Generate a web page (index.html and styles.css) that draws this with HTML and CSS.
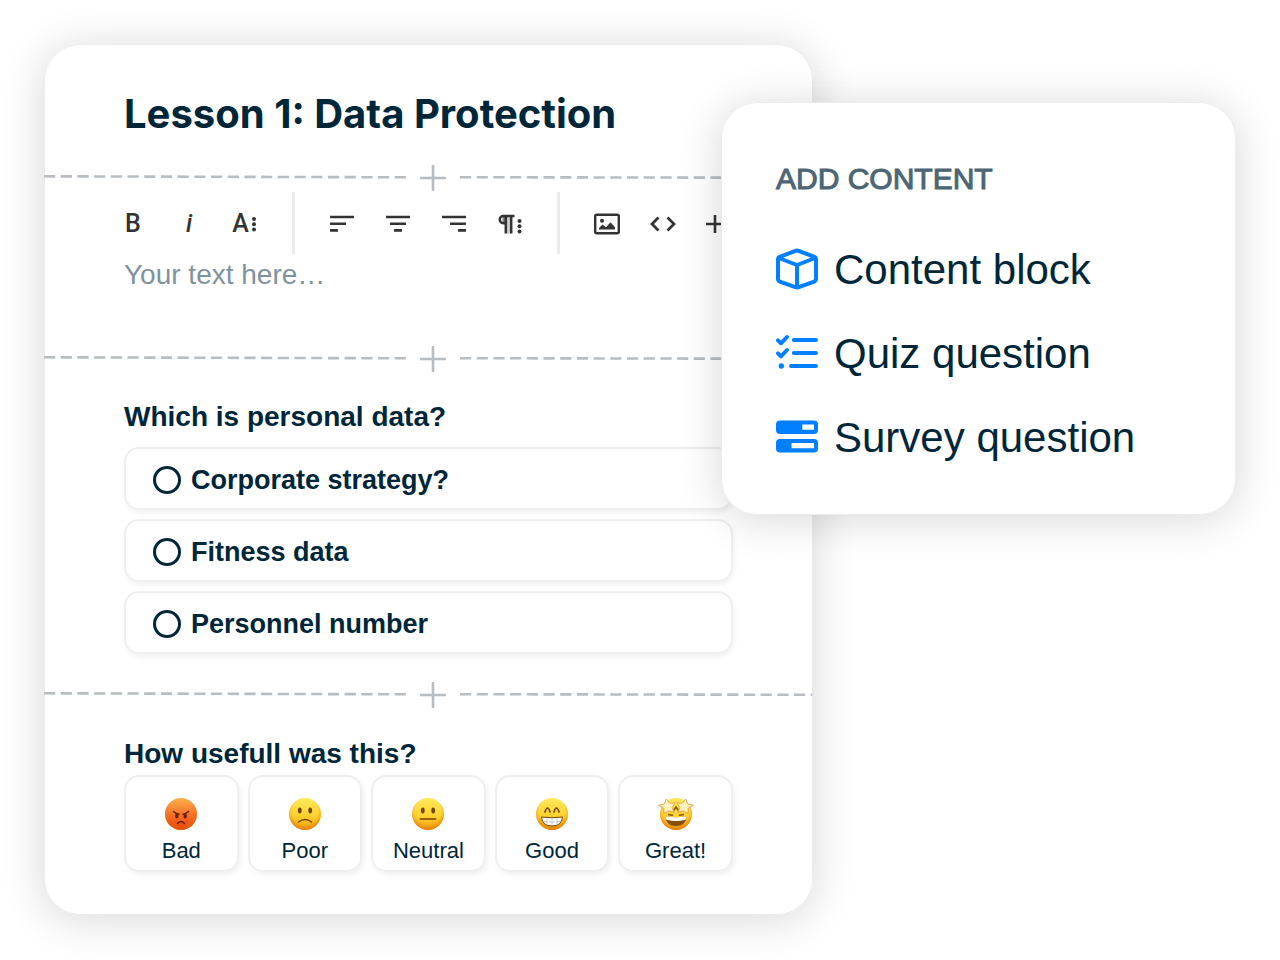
FILE: index.html
```html
<!DOCTYPE html>
<html lang="en">
<head>
<meta charset="utf-8">
<meta name="viewport" content="width=device-width, initial-scale=1">
<title>Lesson editor</title>
<link rel="stylesheet" href="styles.css">
</head>
<body>
<svg class="defs" width="0" height="0" aria-hidden="true">
  <defs>
    <linearGradient id="yellow" x1="0" y1="0" x2="0" y2="1">
      <stop offset="0" stop-color="#ffe95c"/><stop offset=".55" stop-color="#fdd230"/><stop offset="1" stop-color="#f29a0c"/>
    </linearGradient>
    <linearGradient id="red" x1="0" y1="0" x2="0" y2="1">
      <stop offset="0" stop-color="#fbb04c"/><stop offset=".5" stop-color="#f6752a"/><stop offset="1" stop-color="#ee3c08"/>
    </linearGradient>
    <radialGradient id="rim" cx=".5" cy=".42" r=".58">
      <stop offset=".7" stop-color="#e07a00" stop-opacity="0"/><stop offset="1" stop-color="#d96c00" stop-opacity=".6"/>
    </radialGradient>
  </defs>
</svg>
<div class="stage">
  <main class="card">
    <h1 class="title">Lesson 1: Data Protection</h1>

    <div class="divider divider-first">
      <svg class="dash dash-left" aria-hidden="true"><line x1="0" y1="11.3" x2="100%" y2="12.3"/></svg>
      <button class="insert" type="button" aria-label="Insert block"><svg width="26" height="26" viewBox="0 0 26 26"><path d="M13 1v24M1 13h24"/></svg></button>
      <svg class="dash dash-right" aria-hidden="true"><line x1="0" y1="12.2" x2="100%" y2="12.8"/></svg>
    </div>

    <section class="editor">
      <div class="toolbar" role="toolbar" aria-label="Text formatting">
        <button class="tool" type="button" aria-label="Bold">B</button>
        <button class="tool tool-italic" type="button" aria-label="Italic">i</button>
        <button class="tool" type="button" aria-label="More text">A<svg width="8" height="18" viewBox="0 0 8 18"><g fill="#333"><circle cx="4" cy="4" r="2"/><circle cx="4" cy="9.300" r="2"/><circle cx="4" cy="14.500" r="2"/></g></svg></button>
        <span class="separator"></span>
        <button class="tool" type="button" aria-label="Align left"><svg width="24" height="18" viewBox="0 0 24 18"><path class="bars" d="M0 2h24M0 8.700h16M0 15.400h8"/></svg></button>
        <button class="tool" type="button" aria-label="Align center"><svg width="24" height="18" viewBox="0 0 24 18"><path class="bars" d="M0 2h24M4 8.700h16M8 15.400h8"/></svg></button>
        <button class="tool" type="button" aria-label="Align right"><svg width="24" height="18" viewBox="0 0 24 18"><path class="bars" d="M0 2h24M8 8.700h16M16 15.400h8"/></svg></button>
        <button class="tool" type="button" aria-label="Paragraph format"><svg width="24" height="20" viewBox="0 0 24 20"><g fill="none" stroke="#333" stroke-width="2.500"><path d="M16.500 2H5.300a3.600 3.600 0 0 0 0 7.200H7M7.800 2v17.500M13.200 2v17.500"/></g><path d="M4.500 2h3v7h-3z" fill="#333" opacity=".6"/><path d="M9 3h3v16.500H9z" fill="#333" opacity=".25"/><g fill="#333"><circle cx="21.500" cy="7" r="2"/><circle cx="21.500" cy="12.300" r="2"/><circle cx="21.500" cy="17.500" r="2"/></g></svg></button>
        <span class="separator"></span>
        <button class="tool" type="button" aria-label="Insert image"><svg width="28" height="22" viewBox="0 0 28 22"><rect x="2.200" y="1.700" width="23.600" height="18.600" rx="1.500" fill="none" stroke="#333" stroke-width="2.400"/><circle cx="9" cy="7.700" r="2" fill="#333"/><path d="M6 16.500v-1.500l3.500-3.500 3.500 2.800 4.500-5 4.500 5v2.200z" fill="#333"/></svg></button>
        <button class="tool" type="button" aria-label="Code view"><svg width="28" height="18" viewBox="0 0 28 18"><path d="M9.500 2.500L3 9l6.500 6.500M18.500 2.500L25 9l-6.500 6.500" fill="none" stroke="#333" stroke-width="2.700"/></svg></button>
        <button class="tool" type="button" aria-label="More"><svg width="28" height="20" viewBox="0 0 28 20"><path d="M10 1v18M1 10h18" fill="none" stroke="#333" stroke-width="2.600"/></svg></button>
      </div>
      <input class="text-entry" type="text" aria-label="Text" placeholder="Your text here…">
    </section>

    <div class="divider divider-second">
      <svg class="dash dash-left" aria-hidden="true"><line x1="0" y1="11.3" x2="100%" y2="12.3"/></svg>
      <button class="insert" type="button" aria-label="Insert block"><svg width="26" height="26" viewBox="0 0 26 26"><path d="M13 1v24M1 13h24"/></svg></button>
      <svg class="dash dash-right" aria-hidden="true"><line x1="0" y1="12.2" x2="100%" y2="12.8"/></svg>
    </div>

    <section class="block">
      <h2 class="question">Which is personal data?</h2>
      <div class="options">
        <label class="option"><input class="radio" type="radio" name="personal">Corporate strategy?</label>
        <label class="option"><input class="radio" type="radio" name="personal">Fitness data</label>
        <label class="option"><input class="radio" type="radio" name="personal">Personnel number</label>
      </div>
    </section>

    <div class="divider divider-third">
      <svg class="dash dash-left" aria-hidden="true"><line x1="0" y1="11.3" x2="100%" y2="12.3"/></svg>
      <button class="insert" type="button" aria-label="Insert block"><svg width="26" height="26" viewBox="0 0 26 26"><path d="M13 1v24M1 13h24"/></svg></button>
      <svg class="dash dash-right" aria-hidden="true"><line x1="0" y1="12.2" x2="100%" y2="12.8"/></svg>
    </div>

    <section class="block">
      <h2 class="question">How usefull was this?</h2>
      <div class="ratings">
        <button class="rating" type="button">
          <svg class="emoji" viewBox="0 0 36 36"><circle cx="18" cy="18" r="16" fill="url(#red)"/><circle cx="18" cy="18" r="16" fill="url(#rim)"/><g fill="none" stroke="#6b2203" stroke-width="1.500" stroke-linecap="round"><path d="M10.500 15.500q2.500 2.500 5.500 2.800M25.500 15.500q-2.500 2.500-5.500 2.800M14.500 27.500q3.500-3.800 7 0"/></g><ellipse cx="13.800" cy="20" rx="1.700" ry="2.600" fill="#6b2203"/><ellipse cx="22.200" cy="20" rx="1.700" ry="2.600" fill="#6b2203"/></svg>
          Bad</button>
        <button class="rating" type="button">
          <svg class="emoji" viewBox="0 0 36 36"><circle cx="18" cy="18" r="16" fill="url(#yellow)"/><circle cx="18" cy="18" r="16" fill="url(#rim)"/><ellipse cx="12.800" cy="14.500" rx="1.900" ry="3" fill="#734506"/><ellipse cx="23.200" cy="14.500" rx="1.900" ry="3" fill="#734506"/><path d="M11.500 26q6.500-4.800 13 0" fill="none" stroke="#734506" stroke-width="1.500" stroke-linecap="round"/></svg>
          Poor</button>
        <button class="rating" type="button">
          <svg class="emoji" viewBox="0 0 36 36"><circle cx="18" cy="18" r="16" fill="url(#yellow)"/><circle cx="18" cy="18" r="16" fill="url(#rim)"/><ellipse cx="12.800" cy="14.500" rx="1.900" ry="3" fill="#734506"/><ellipse cx="23.200" cy="14.500" rx="1.900" ry="3" fill="#734506"/><path d="M10.500 23h15" fill="none" stroke="#734506" stroke-width="1.700" stroke-linecap="round"/></svg>
          Neutral</button>
        <button class="rating" type="button">
          <svg class="emoji" viewBox="0 0 36 36"><circle cx="18" cy="18" r="16" fill="url(#yellow)"/><circle cx="18" cy="18" r="16" fill="url(#rim)"/><path d="M11 16q1.200-4 2.500-4t2.500 4M20 16q1.200-4 2.500-4t2.500 4" fill="none" stroke="#734506" stroke-width="1.600" stroke-linecap="round"/><path d="M7.500 21q10.500 1.500 21 0q-.8 9-10.500 9t-10.500-9z" fill="#fff" stroke="#734506" stroke-width="1"/><path d="M8.500 25.300q9.500 1.500 19 0M13 22v7M18 22.500v7.500M23 22v7" fill="none" stroke="#b5b5b0" stroke-width=".7"/></svg>
          Good</button>
        <button class="rating" type="button">
          <svg class="emoji" viewBox="0 0 36 36"><circle cx="18" cy="18" r="16" fill="url(#yellow)"/><circle cx="18" cy="18" r="16" fill="url(#rim)"/><path d="M7.500 20.500q10.500 1.500 21 0q-.8 9.500-10.500 9.500t-10.500-9.500z" fill="#87500b"/><path d="M7.500 20.500q10.500 1.500 21 0l-1 3.200q-9.500 2.500-19 0z" fill="#fff"/><path d="M14.500 16l3.500-5 3.500 5M10 18.500l5 .8M26 18.500l-5 .8" fill="none" stroke="#87500b" stroke-width="1.500"/><path d="M8.300 3l3.300 4.200 5.600-.4-3.100 4.600 2.100 5-5.300-1.500-5 2.700v-5.300L.6 9.300l5.600-1.300z" fill="#fff0bd" stroke="#dd9a3c" stroke-width=".8"/><path d="M27.700 3l-3.300 4.200-5.600-.4 3.100 4.600-2.100 5 5.300-1.500 5 2.700v-5.300l5.300-3-5.600-1.300z" fill="#fff0bd" stroke="#dd9a3c" stroke-width=".8"/></svg>
          Great!</button>
      </div>
    </section>
  </main>

  <aside class="popup" aria-labelledby="add-content">
    <h2 class="popup-title" id="add-content">ADD CONTENT</h2>
    <div class="menu">
      <button class="menu-item" type="button"><svg class="menu-icon" viewBox="0 0 42 42"><path d="M3.600 8.800Q2 9.400 2 11.500v19.300q0 2 1.800 2.800l15.500 5.600q1.700.6 3.400 0l15.500-5.600Q40 32.800 40 30.800V11.500q0-2.100-1.600-2.700L22.500 2.900q-1.500-.6-3 0zM2.800 10L21 17 39.200 10M21 17v22" fill="none" stroke="#007fff" stroke-width="4" stroke-linejoin="round"/></svg>Content block</button>
      <button class="menu-item" type="button"><svg class="menu-icon" viewBox="0 0 42 42"><g fill="none" stroke="#007fff" stroke-width="3.900" stroke-linecap="round" stroke-linejoin="round"><path d="M17.800 8H40M17.800 21H40M15 34H40M2 8.300l3 3 6-6.300M2 21.400l3 3 6-6.400"/></g><circle cx="5.300" cy="34" r="2.700" fill="#007fff"/></svg>Quiz question</button>
      <button class="menu-item" type="button"><svg class="menu-icon" viewBox="0 0 42 42"><rect y="4.500" width="42" height="13.500" rx="4" fill="#007fff"/><rect y="23" width="42" height="13.500" rx="4" fill="#007fff"/><path d="M26.300 8.500h11.700v5.300H26.300zM15.500 27h22.500v5.300H15.500z" fill="#fff"/></svg>Survey question</button>
    </div>
  </aside>
</div>
</body>
</html>
```
FILE: styles.css
```css
* {
  box-sizing: border-box;
}

body {
  margin: 0;
  background: #fff;
  color: #00263a;
  font-family: "Liberation Sans", Arial, sans-serif;
}

h1,
h2 {
  margin: 0;
}

button {
  margin: 0;
  padding: 0;
  border: 0;
  background: none;
  color: inherit;
  font: inherit;
}

.defs {
  position: absolute;
}

.stage {
  position: relative;
  padding: 44px;
}

.card {
  width: 64.5%;
  padding: 46px 0 43px;
  border-radius: 36px;
  background: #fff;
  box-shadow: inset 0 0 0 1px #ececec, 0 4px 44px rgba(0, 0, 0, 0.16);
}

.title {
  padding: 0 80px;
  font-family: Inter, sans-serif;
  font-size: 40px;
  font-weight: 700;
  line-height: 48px;
  white-space: nowrap;
}

.divider {
  display: flex;
  align-items: center;
}

.divider-first {
  margin: 27px 0 1px;
}

.divider-second {
  margin: 52px 0 27px;
}

.divider-third {
  margin: 28px 0;
}

.dash {
  min-width: 0;
  width: 0;
  height: 26px;
  stroke: #b7bdc0;
  stroke-width: 2.6;
  stroke-dasharray: 11.2 5.5;
}

.dash-left {
  flex: 36;
}

.dash-right {
  flex: 35;
}

.insert {
  display: flex;
  justify-content: center;
  width: 54px;
  stroke: #b7bdc0;
  stroke-width: 2.6;
  stroke-linecap: round;
}

.editor {
  padding: 0 80px;
}

.toolbar {
  display: flex;
  align-items: center;
  height: 62px;
  margin: 0 -19px;
}

.tool {
  display: flex;
  flex: none;
  align-items: center;
  justify-content: center;
  gap: 1px;
  width: 56px;
  height: 40px;
  padding-top: 2px;
  color: #333;
  font-family: Roboto, sans-serif;
  font-size: 25px;
  font-weight: 500;
  line-height: 40px;
}

.tool-italic {
  font-style: italic;
}

.bars {
  fill: none;
  stroke: #333;
  stroke-width: 2.6;
}

.separator {
  flex: none;
  width: 3px;
  height: 62px;
  margin: 0 19px;
  background: #ebebeb;
}

.text-entry {
  display: block;
  width: 100%;
  height: 40px;
  padding: 1px 0 0;
  border: 0;
  outline: 0;
  background: none;
  color: inherit;
  font: inherit;
  font-size: 28px;
}

.text-entry::placeholder {
  color: #7f929d;
  opacity: 1;
}

.block {
  padding: 0 80px;
}

.question {
  font-size: 28px;
  font-weight: 700;
  line-height: 36px;
}

.options {
  display: grid;
  gap: 9px;
  margin-top: 12px;
}

.option {
  display: flex;
  align-items: center;
  gap: 10px;
  height: 63px;
  padding: 3px 27px 0;
  border: 2px solid #efefef;
  border-radius: 15px;
  box-shadow: 1px 3px 5px rgba(0, 0, 0, 0.06);
  font-size: 27px;
  font-weight: 700;
}

.radio {
  flex: none;
  width: 28px;
  height: 28px;
  margin: 0;
  border: 3px solid #00263a;
  border-radius: 50%;
  appearance: none;
}

.radio:checked {
  box-shadow: inset 0 0 0 5px #fff;
  background: #00263a;
}

.ratings {
  display: grid;
  grid-template-columns: repeat(5, 1fr);
  gap: 9px;
  margin-top: 3px;
}

.rating {
  display: flex;
  flex-direction: column;
  align-items: center;
  gap: 6px;
  height: 97px;
  padding-top: 19px;
  border: 2px solid #efefef;
  border-radius: 15px;
  box-shadow: 2px 3px 5px rgba(0, 0, 0, 0.06);
  font-size: 22px;
  line-height: 26px;
}

.emoji {
  width: 36px;
  height: 36px;
}

.popup {
  position: absolute;
  top: 102px;
  right: 44px;
  width: 515px;
  padding: 59px 55px 53px;
  border-radius: 36px;
  background: #fff;
  box-shadow: inset 0 0 0 1px #ececec, 0 4px 44px rgba(0, 0, 0, 0.16);
}

.popup-title {
  color: #4d6575;
  font-size: 30px;
  font-weight: 400;
  line-height: 36px;
  -webkit-text-stroke: 1px #4d6575;
}

.menu {
  display: grid;
  gap: 36px;
  margin-top: 49px;
}

.menu-item {
  display: flex;
  align-items: center;
  gap: 16px;
  font-size: 42px;
  line-height: 48px;
  white-space: nowrap;
}

.menu-icon {
  flex: none;
  width: 42px;
  height: 42px;
  margin-bottom: 3px;
}
```
